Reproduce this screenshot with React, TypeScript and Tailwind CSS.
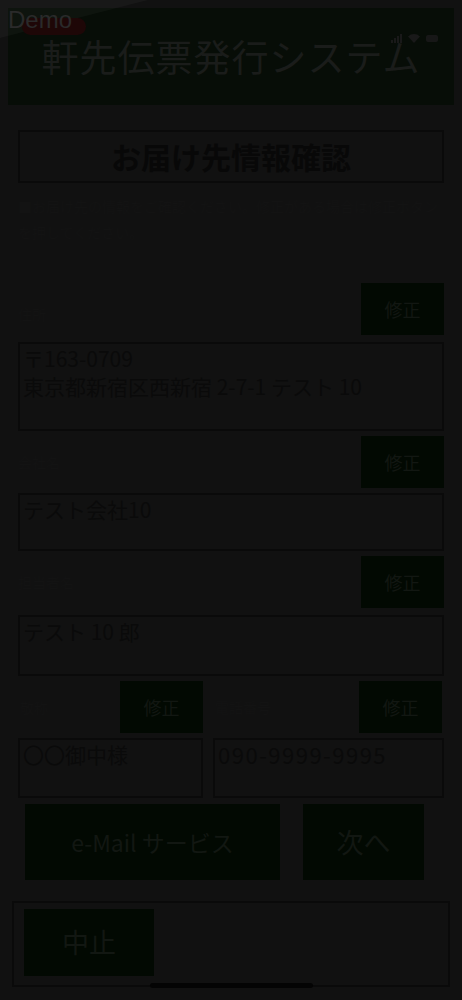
import React from 'react';

const font = { fontFamily: '"Noto Sans CJK JP", "Noto Sans", sans-serif' };

function EditButton({ className = '' }: { className?: string }) {
    return (
        <button className={`h-[52px] bg-[#020902] text-[#121712] text-[18px] ${className}`}>
            修正
        </button>
    );
}

export default function App() {
    return (
        <div className="relative w-[462px] h-[1000px] bg-[#111111] overflow-hidden" style={font}>
            {/* demo ribbon */}
            <div className="absolute z-10 left-0 top-0 w-0 h-0 border-t-[38px] border-r-[148px] border-t-[#ffffff08] border-r-transparent" />
            <div className="absolute z-10 left-[22px] top-[18px] w-[64px] h-[17px] rounded-full bg-[#1e0707]" />
            <div className="absolute z-10 left-[8px] top-[8px] text-[24px] leading-none text-[#2a2a2a] font-['Liberation_Sans']">Demo</div>

            {/* header */}
            <div className="mx-[8px] mt-[8px] h-[97px] bg-[#070d07] relative flex items-end justify-center pb-[30px]">
                <div className="absolute right-[16px] top-[26px] flex items-center gap-[6px]">
                    <div className="flex items-end gap-[1px]">
                        <span className="w-[2px] h-[3px] bg-[#191919]" />
                        <span className="w-[2px] h-[5px] bg-[#191919]" />
                        <span className="w-[2px] h-[7px] bg-[#191919]" />
                        <span className="w-[2px] h-[9px] bg-[#191919]" />
                    </div>
                    <svg width="12" height="9" viewBox="0 0 12 9"><path d="M6 9 0 2.5a8.5 8.5 0 0 1 12 0Z" fill="#191919" /></svg>
                    <div className="w-[12px] h-[7px] bg-[#171717] rounded-[2px]" />
                </div>
                <h1 className="text-[37px] leading-none text-[#1a1c1a] tracking-[1px]">軒先伝票発行システム</h1>
            </div>

            <div className="px-[18px] pt-[25px]">
                {/* section title */}
                <div className="h-[53px] border-[2px] border-[#0a0a0a] flex items-center justify-center">
                    <h2 className="text-[30px] font-bold text-[#080808]">お届け先情報確認</h2>
                </div>

                {/* instruction */}
                <p className="mt-[10px] text-[14px] leading-[26px] text-[#131313]">
                    ■お届け先の情報をご確認ください。修正がある場合は修正ボタンを押してください。
                </p>

                {/* address */}
                <div className="mt-[38px] flex items-end justify-between">
                    <span className="text-[14px] text-[#131313] mb-[10px]">住所</span>
                    <EditButton className="w-[83px]" />
                </div>
                <div className="mt-[7px] h-[89px] border-[2px] border-[#0a0a0a] px-[3px] text-[21px] leading-[28px] text-[#0a0a0a]">
                    <div>〒163-0709</div>
                    <div>東京都新宿区西新宿 2-7-1 テスト 10</div>
                </div>

                {/* company */}
                <div className="mt-[5px] flex items-center justify-between">
                    <span className="text-[14px] text-[#131313]">会社名</span>
                    <EditButton className="w-[83px]" />
                </div>
                <div className="mt-[5px] h-[58px] border-[2px] border-[#0a0a0a] px-[3px] text-[21px] leading-[28px] text-[#0a0a0a]">
                    テスト会社10
                </div>

                {/* name */}
                <div className="mt-[5px] flex items-center justify-between">
                    <span className="text-[14px] text-[#131313]">担当者名</span>
                    <EditButton className="w-[83px]" />
                </div>
                <div className="mt-[7px] h-[61px] border-[2px] border-[#0a0a0a] px-[3px] text-[21px] leading-[28px] text-[#0a0a0a]">
                    テスト 10 郎
                </div>

                {/* honorific + phone */}
                <div className="mt-[5px] grid grid-cols-[185px_1fr] gap-x-[10px]">
                    <div className="flex items-center justify-between">
                        <span className="text-[14px] text-[#131313] pl-[2px]">敬称</span>
                        <EditButton className="w-[83px]" />
                    </div>
                    <div className="flex items-center justify-between">
                        <span className="text-[14px] text-[#131313] pl-[2px]">電話番号</span>
                        <EditButton className="w-[83px] mr-[2px]" />
                    </div>
                    <div className="mt-[5px] h-[60px] border-[2px] border-[#0a0a0a] px-[3px] text-[21px] leading-[28px] text-[#0a0a0a]">
                        〇〇御中様
                    </div>
                    <div className="mt-[5px] h-[60px] border-[2px] border-[#0a0a0a] px-[3px] text-[22px] leading-[28px] text-[#0a0a0a] tracking-[1.5px]">
                        090-9999-9995
                    </div>
                </div>

                {/* actions */}
                <div className="mt-[6px] flex gap-[23px] px-[7px]">
                    <button className="w-[255px] h-[76px] bg-[#020902] text-[#121712] text-[23px]">e-Mail サービス</button>
                    <button className="w-[121px] h-[76px] bg-[#020902] text-[#121712] text-[27px]">次へ</button>
                </div>
            </div>

            {/* bottom bar */}
            <div className="mx-[12px] mt-[21px] h-[86px] border-[2px] border-[#0a0a0a] pl-[10px] pt-[6px]">
                <button className="w-[130px] h-[67px] bg-[#020902] text-[#121712] text-[27px]">中止</button>
            </div>
            <div className="absolute left-[150px] top-[983px] w-[163px] h-[5px] rounded-full bg-[#040404]" />
        </div>
    );
}
